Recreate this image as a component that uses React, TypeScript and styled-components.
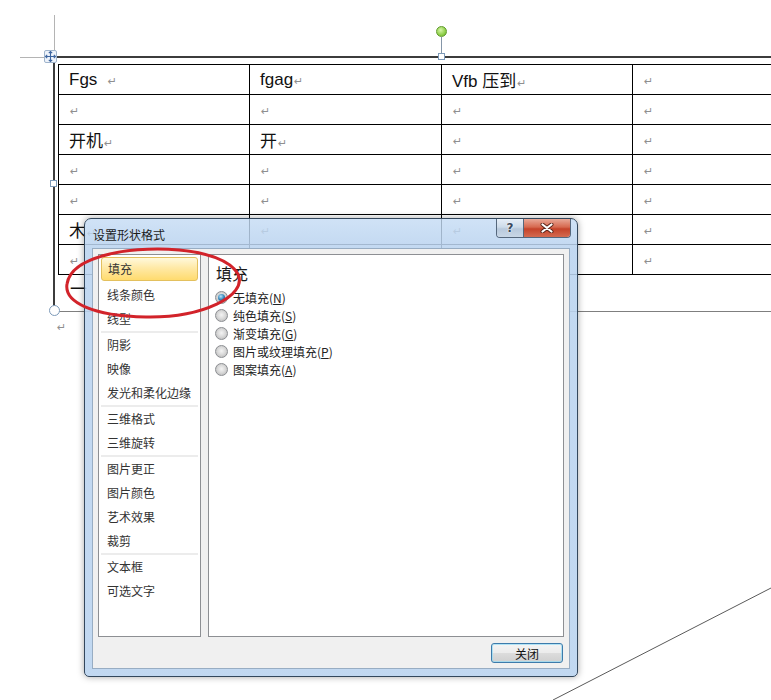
import styled, { createGlobalStyle } from "styled-components";

const GlobalStyle = createGlobalStyle`
  html, body {
    margin: 0;
    padding: 0;
    background: #ffffff;
  }
  body {
    font-family: "Liberation Sans", "Noto Sans CJK SC", sans-serif;
  }
`;

const Page = styled.div`
  position: relative;
  width: 771px;
  height: 700px;
  overflow: hidden;
  box-sizing: border-box;
  padding: 56px 0 0 53px;
  background: #fff;
`;

/* ---------- document ---------- */

const Shape = styled.div`
  width: 760px;
  height: 256px;
  box-sizing: border-box;
  border-top: 2px solid #3c3c3c;
  border-left: 2px solid #3c3c3c;
  border-bottom: 1px solid #7f7f7f;
  padding: 6px 0 0 3px;
`;

const Table = styled.table`
  border-collapse: collapse;
  table-layout: fixed;
  width: 765px;

  td {
    border: 1px solid #000;
    height: 29px;
    padding: 0 0 0 10px;
    white-space: nowrap;
    vertical-align: middle;
    font-size: 17px;
    color: #111;
  }
`;

const Mark = styled.span`
  font-family: "DejaVu Sans", sans-serif;
  font-size: 11px;
  color: #8f8f8f;
  margin-left: 1px;
  vertical-align: 0;
`;

const Para = styled.div`
  padding-left: 12px;
  font-size: 17px;
  line-height: 30px;
  color: #111;
`;

const AfterMark = styled.div`
  margin-top: 5px;
  padding-left: 3px;
  line-height: 18px;
`;

/* ---------- selection handles ---------- */

const Guide = styled.div<{ $v?: boolean }>`
  position: absolute;
  background: #b4b4b4;
  ${({ $v }) =>
    $v
      ? "left: 54px; top: 15px; width: 1px; height: 36px;"
      : "left: 20px; top: 57px; width: 24px; height: 1px;"}
`;

const MoveHandle = styled.div`
  position: absolute;
  left: 44px;
  top: 50px;
  width: 13px;
  height: 13px;
  box-sizing: border-box;
  border: 1px solid #9fb4cc;
  border-radius: 2px;
  background: #eef3fa;
  display: flex;
  align-items: center;
  justify-content: center;
`;

const Knob = styled.div<{ $x: number; $y: number; $round?: boolean; $green?: boolean }>`
  position: absolute;
  left: ${({ $x }) => $x}px;
  top: ${({ $y }) => $y}px;
  width: ${({ $round }) => ($round ? 11 : 7)}px;
  height: ${({ $round }) => ($round ? 11 : 7)}px;
  box-sizing: border-box;
  border: 1px solid ${({ $green }) => ($green ? "#5f9a2c" : "#7d9ab9")};
  border-radius: ${({ $round }) => ($round ? "50%" : "0")};
  background: ${({ $green }) =>
    $green
      ? "radial-gradient(circle at 40% 35%, #d6f5a8, #8fcf4a 60%, #6aab2e)"
      : "#ffffff"};
`;

const Stem = styled.div`
  position: absolute;
  left: 441px;
  top: 37px;
  width: 1px;
  height: 16px;
  background: #8596a8;
`;

const Overlay = styled.svg<{ $x: number; $y: number }>`
  position: absolute;
  left: ${({ $x }) => $x}px;
  top: ${({ $y }) => $y}px;
  overflow: visible;
  pointer-events: none;
`;

/* ---------- dialog ---------- */

const Window = styled.div`
  position: absolute;
  left: 84px;
  top: 218px;
  width: 494px;
  height: 459px;
  box-sizing: border-box;
  border: 1px solid #33475c;
  border-radius: 7px 7px 5px 5px;
  background: linear-gradient(
    180deg,
    rgba(196, 219, 244, 0.8) 0px,
    rgba(186, 211, 239, 0.88) 30px,
    rgba(190, 214, 240, 0.95) 100%
  );
  box-shadow: 0 0 7px rgba(0, 0, 0, 0.35);
  display: flex;
  flex-direction: column;
  font-family: "Noto Sans CJK SC", "Liberation Sans", sans-serif;
`;

const TitleBar = styled.div`
  height: 29px;
  display: flex;
  align-items: center;
  justify-content: space-between;
  padding: 0 6px 0 8px;
`;

const Title = styled.div`
  font-size: 12px;
  color: #1c1c1c;
  padding-top: 1px;
`;

const Caption = styled.div`
  align-self: flex-start;
  display: flex;
  border: 1px solid #55677c;
  border-top: none;
  border-radius: 0 0 4px 4px;
  overflow: hidden;
`;

const CapButton = styled.div<{ $close?: boolean }>`
  width: ${({ $close }) => ($close ? 46 : 26)}px;
  height: 18px;
  display: flex;
  align-items: center;
  justify-content: center;
  font-family: "DejaVu Sans", sans-serif;
  font-weight: bold;
  font-size: 12px;
  color: #3a4a5e;
  text-shadow: 0 0 2px #fff, 0 0 1px #fff;
  border-left: ${({ $close }) => ($close ? "1px solid #55677c" : "none")};
  background: ${({ $close }) =>
    $close
      ? "linear-gradient(180deg, #e9a897 0%, #d6694f 45%, #c5432a 55%, #d46a50 100%)"
      : "linear-gradient(180deg, #e6eef7 0%, #cddbe9 45%, #b8c9dc 55%, #c9d7e6 100%)"};
`;

const Client = styled.div`
  flex: 1;
  margin: 0 7px 7px 7px;
  border: 1px solid #98adc3;
  background: #f0f0f0;
  padding: 5px;
  display: flex;
  flex-direction: column;
`;

const Panels = styled.div`
  height: 383px;
  display: grid;
  grid-template-columns: 103px 1fr;
  gap: 7px;
`;

const NavList = styled.div`
  border: 1px solid #8d8f93;
  background: #fff;
  padding-top: 2px;
  box-sizing: border-box;
`;

const NavItem = styled.div<{ $selected?: boolean }>`
  height: 24px;
  box-sizing: border-box;
  font-size: 12px;
  color: #333;
  white-space: nowrap;
  ${({ $selected }) =>
    $selected
      ? `
    margin: 0 2px 2px;
    padding-left: 6px;
    line-height: 22px;
    border: 1px solid #e3c05e;
    border-radius: 3px;
    background: linear-gradient(180deg, #fff9dc 0%, #ffe9a6 45%, #ffdb6e 100%);
  `
      : `
    padding-left: 8px;
    line-height: 24px;
  `}
`;

const NavSeparator = styled.div`
  height: 2px;
  margin: 0 2px;
  background: #ececec;
`;

const Content = styled.div`
  border: 1px solid #8d8f93;
  background: #fff;
  padding: 8px 6px 0 6px;
`;

const Heading = styled.div`
  font-size: 16px;
  line-height: 20px;
  padding-left: 1px;
  color: #1a1a1a;
  margin-bottom: 5px;
`;

const RadioRow = styled.div`
  height: 18px;
  display: flex;
  align-items: center;
  gap: 5px;
  font-size: 12px;
  color: #222;
`;

const Radio = styled.span<{ $checked?: boolean }>`
  width: 13px;
  height: 13px;
  box-sizing: border-box;
  border-radius: 50%;
  border: 1px solid #8c8e92;
  background: radial-gradient(circle at 50% 45%, #f4f4f4 0%, #dadada 45%, #c4c4c4 75%, #e8e8e8 100%);
  display: flex;
  align-items: center;
  justify-content: center;

  &::after {
    content: "";
    display: ${({ $checked }) => ($checked ? "block" : "none")};
    width: 7px;
    height: 7px;
    border-radius: 50%;
    background: radial-gradient(circle at 40% 35%, #b9e3fa 0%, #2a7fb5 55%, #0f4c7a 100%);
  }
`;

const Footer = styled.div`
  display: flex;
  justify-content: flex-end;
  margin-top: 6px;
  padding-right: 1px;
`;

const PushButton = styled.div`
  width: 72px;
  height: 20px;
  box-sizing: border-box;
  border: 1px solid #3d7bab;
  border-radius: 3px;
  box-shadow: inset 0 0 0 1px rgba(150, 220, 245, 0.7);
  background: linear-gradient(180deg, #f4f4f4 0%, #ececec 48%, #dcdcdc 52%, #d0d0d0 100%);
  display: flex;
  align-items: center;
  justify-content: center;
  font-size: 12px;
  color: #111;
`;

const rows: string[][] = [
  ["Fgs\u00a0\u00a0", "fgag", "Vfb 压到", ""],
  ["", "", "", ""],
  ["开机", "开", "", ""],
  ["", "", "", ""],
  ["", "", "", ""],
  ["木", "", "", ""],
  ["", "", "", ""],
];

type NavEntry = string | null;
const nav: NavEntry[] = [
  "线条颜色",
  "线型",
  null,
  "阴影",
  "映像",
  "发光和柔化边缘",
  null,
  "三维格式",
  "三维旋转",
  null,
  "图片更正",
  "图片颜色",
  "艺术效果",
  "裁剪",
  null,
  "文本框",
  "可选文字",
];

const fills = [
  { label: "无填充", key: "N", checked: true },
  { label: "纯色填充", key: "S" },
  { label: "渐变填充", key: "G" },
  { label: "图片或纹理填充", key: "P" },
  { label: "图案填充", key: "A" },
];

export default function App() {
  return (
    <>
      <GlobalStyle />
      <Page>
        <Shape>
          <Table>
            <colgroup>
              <col style={{ width: 191 }} />
              <col style={{ width: 192 }} />
              <col style={{ width: 191 }} />
              <col style={{ width: 191 }} />
            </colgroup>
            <tbody>
              {rows.map((r, i) => (
                <tr key={i}>
                  {r.map((c, j) => (
                    <td key={j}>
                      {c}
                      <Mark>↵</Mark>
                    </td>
                  ))}
                </tr>
              ))}
            </tbody>
          </Table>
          <Para>一</Para>
        </Shape>
        <AfterMark>
          <Mark>↵</Mark>
        </AfterMark>

        <Guide $v />
        <Guide />
        <MoveHandle>
          <svg width="11" height="11" viewBox="0 0 11 11">
            <path
              d="M5.5 0.5 L5.5 10.5 M0.5 5.5 L10.5 5.5 M3.8 2.2 L5.5 0.5 L7.2 2.2 M3.8 8.8 L5.5 10.5 L7.2 8.8 M2.2 3.8 L0.5 5.5 L2.2 7.2 M8.8 3.8 L10.5 5.5 L8.8 7.2"
              stroke="#3d65a0"
              strokeWidth="1.1"
              fill="none"
            />
          </svg>
        </MoveHandle>
        <Stem />
        <Knob $x={436} $y={26} $round $green />
        <Knob $x={438} $y={53} />
        <Knob $x={50} $y={180} />
        <Knob $x={49} $y={305} $round />

        <Window>
          <TitleBar>
            <Title>设置形状格式</Title>
            <Caption>
              <CapButton>?</CapButton>
              <CapButton $close>
                <svg width="14" height="10" viewBox="0 0 14 10">
                  <path d="M2.5 1.5 L11.5 8.5 M11.5 1.5 L2.5 8.5" stroke="#5a2418" strokeWidth="4" strokeLinecap="round" />
                  <path d="M2.5 1.5 L11.5 8.5 M11.5 1.5 L2.5 8.5" stroke="#ffffff" strokeWidth="2.2" strokeLinecap="round" />
                </svg>
              </CapButton>
            </Caption>
          </TitleBar>
          <Client>
            <Panels>
              <NavList>
                <NavItem $selected>填充</NavItem>
                {nav.map((n, i) =>
                  n === null ? <NavSeparator key={i} /> : <NavItem key={i}>{n}</NavItem>
                )}
              </NavList>
              <Content>
                <Heading>填充</Heading>
                {fills.map((f) => (
                  <RadioRow key={f.key}>
                    <Radio $checked={f.checked} />
                    <span>
                      {f.label}(<u>{f.key}</u>)
                    </span>
                  </RadioRow>
                ))}
              </Content>
            </Panels>
            <Footer>
              <PushButton>关闭</PushButton>
            </Footer>
          </Client>
        </Window>

        <Overlay $x={62} $y={246} width="182" height="76" viewBox="0 0 182 76">
          <path
            d="M40 10 C 80 -2, 160 0, 176 28 C 186 50, 140 72, 84 71 C 30 70, 2 56, 5 38 C 7 24, 22 14, 48 8"
            stroke="#d2232a"
            strokeWidth="3"
            fill="none"
            strokeLinecap="round"
          />
        </Overlay>
        <Overlay $x={540} $y={580} width="231" height="120" viewBox="0 0 231 120">
          <line x1="13" y1="120" x2="231" y2="8" stroke="#5a5a5a" strokeWidth="1" />
        </Overlay>
      </Page>
    </>
  );
}
